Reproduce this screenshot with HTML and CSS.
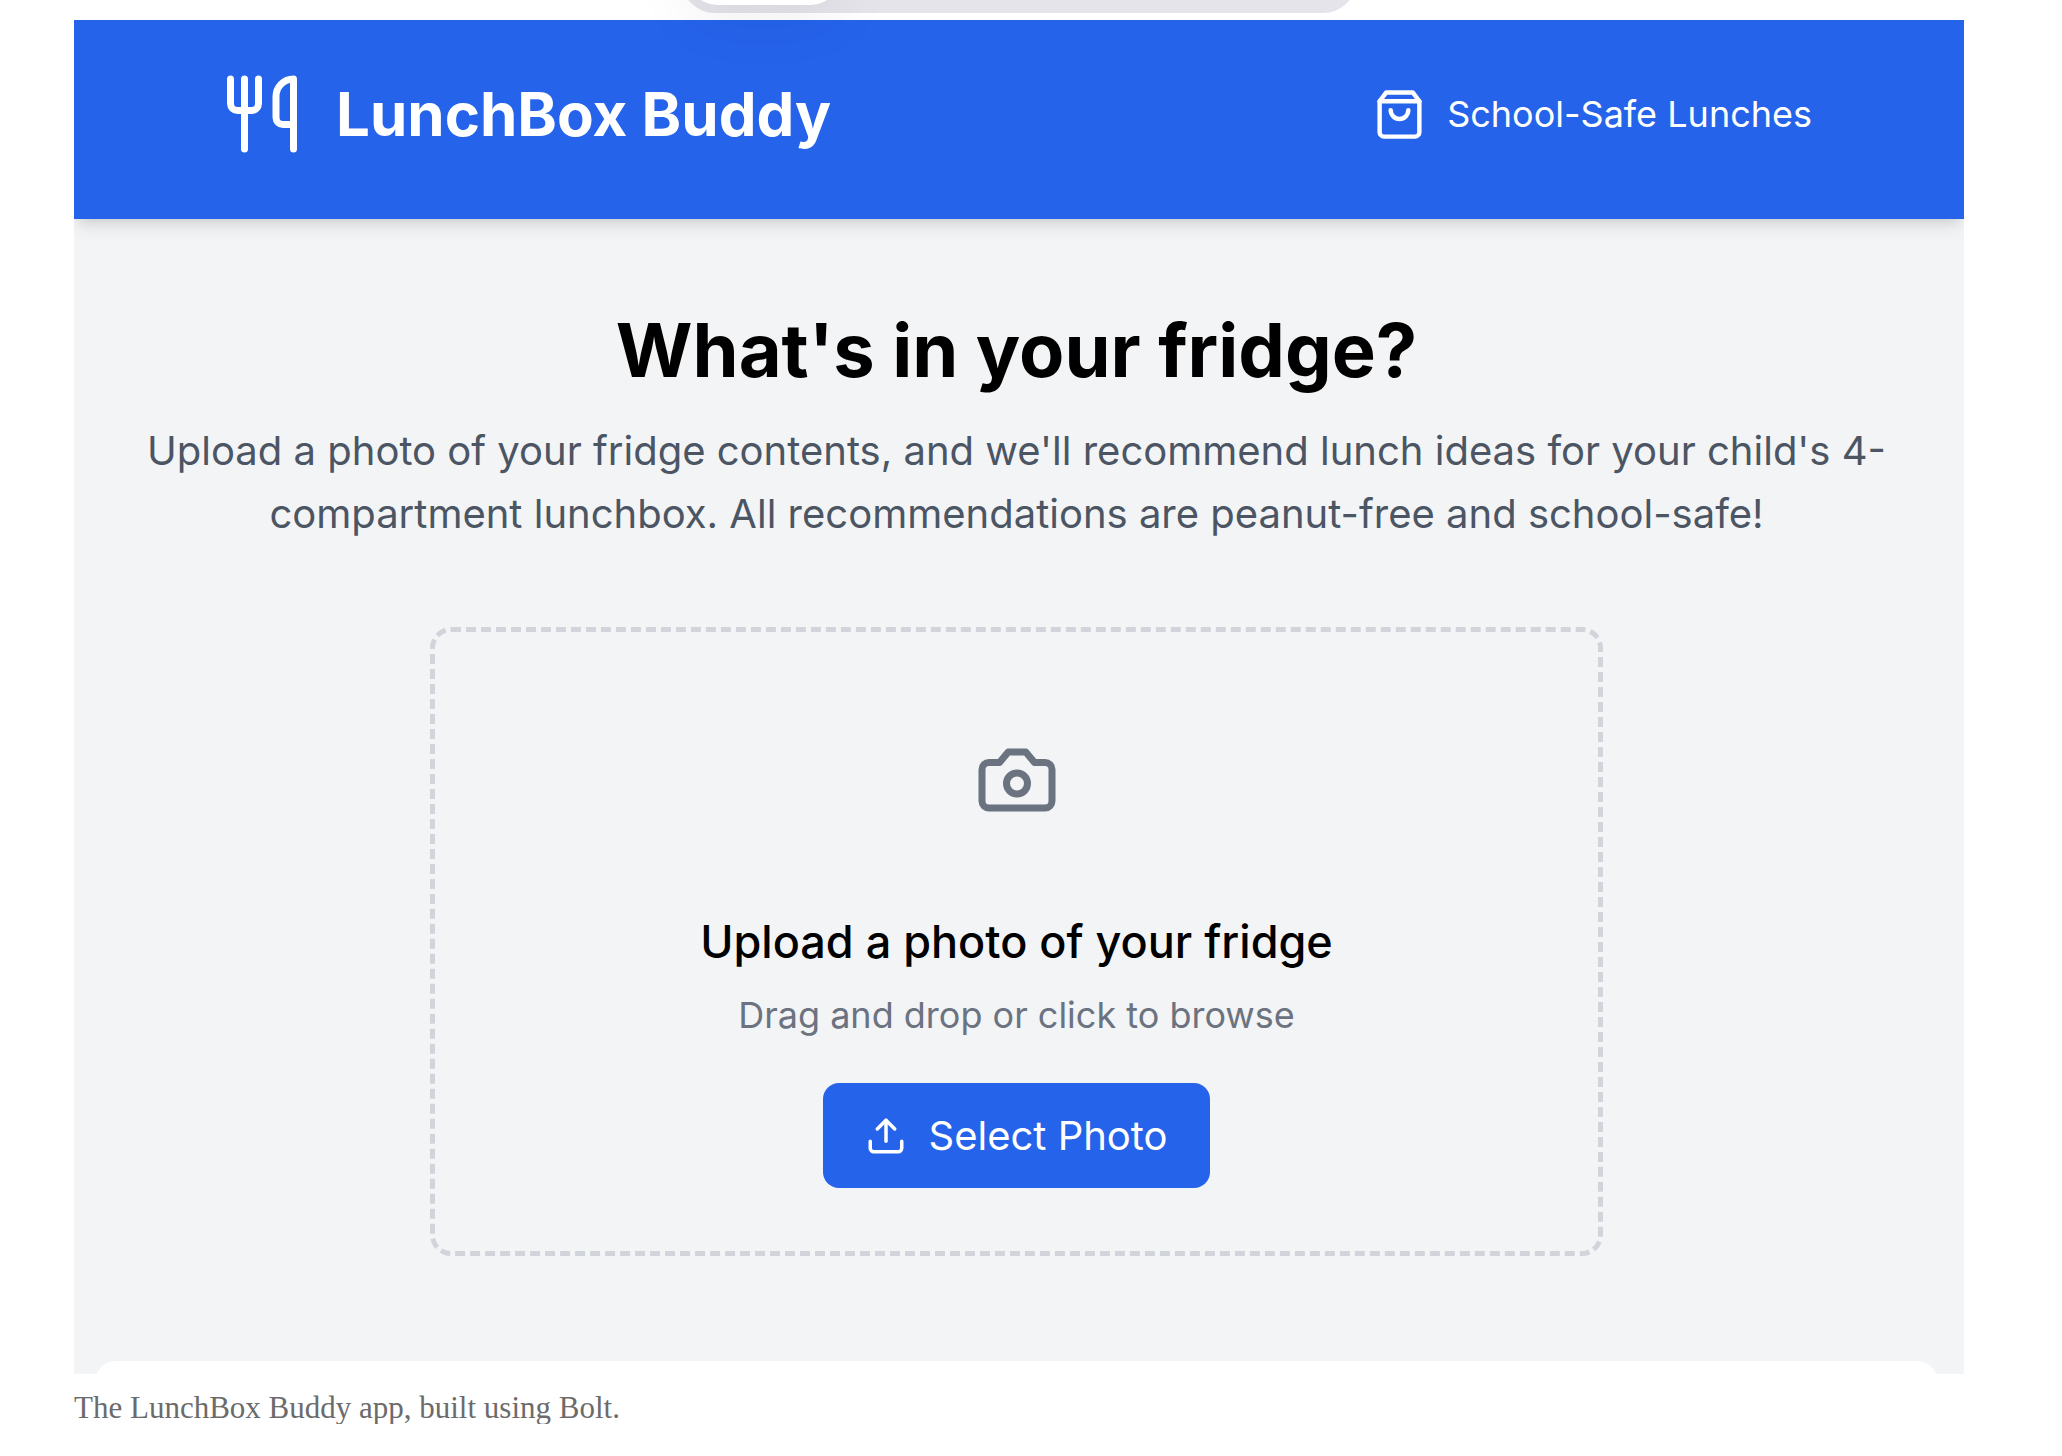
FILE: index.html
```
<!DOCTYPE html>
<html lang="en">
<head>
  <meta charset="UTF-8">
  <meta name="viewport" content="width=device-width, initial-scale=1.0">
  <title>LunchBox Buddy</title>
  <link rel="stylesheet" href="styles.css">
</head>
<body>
  <figure class="preview">
    <div class="app">
      <!-- View switcher, scrolled mostly out of view -->
      <div class="switcher">
        <div class="switcher-active"></div>
      </div>

      <header class="header">
        <div class="brand">
          <svg class="icon-large" viewBox="0 0 24 24">
            <path d="M3 2v7c0 1.1.9 2 2 2h4a2 2 0 0 0 2-2V2"/>
            <path d="M7 2v20"/>
            <path d="M21 15V2a5 5 0 0 0-5 5v6c0 1.1.9 2 2 2h3Zm0 0v7"/>
          </svg>
          <h1>LunchBox Buddy</h1>
        </div>
        <div class="tagline">
          <svg class="icon-medium" viewBox="0 0 24 24">
            <path d="M6 2 3 6v14a2 2 0 0 0 2 2h14a2 2 0 0 0 2-2V6l-3-4Z"/>
            <path d="M3 6h18"/>
            <path d="M16 10a4 4 0 0 1-8 0"/>
          </svg>
          <span>School-Safe Lunches</span>
        </div>
      </header>

      <main class="content">
        <h2>What's in your fridge?</h2>
        <p class="intro">Upload a photo of your fridge contents, and we'll recommend lunch ideas for your child's 4-<wbr>compartment lunchbox. All recommendations are peanut-free and school-safe!</p>

        <!-- Upload area -->
        <section class="dropzone">
          <svg class="icon-large camera" viewBox="0 0 24 24">
            <path d="M14.5 4h-5L7 7H4a2 2 0 0 0-2 2v9a2 2 0 0 0 2 2h16a2 2 0 0 0 2-2V9a2 2 0 0 0-2-2h-3l-2.5-3z"/>
            <circle cx="12" cy="13" r="3"/>
          </svg>
          <h3>Upload a photo of your fridge</h3>
          <p class="hint">Drag and drop or click to browse</p>
          <button type="button" class="select-button">
            <svg class="icon-small" viewBox="0 0 24 24">
              <path d="M21 15v4a2 2 0 0 1-2 2H5a2 2 0 0 1-2-2v-4"/>
              <path d="m17 8-5-5-5 5"/>
              <path d="M12 3v12"/>
            </svg>
            Select Photo
          </button>
        </section>

        <div class="results"></div>
      </main>
    </div>
    <figcaption>The LunchBox Buddy app, built using Bolt.</figcaption>
  </figure>
</body>
</html>
```
FILE: styles.css
```
* {
  box-sizing: border-box;
}
body {
  margin: 0;
  background-color: #fff;
  font-family: Inter, "Liberation Sans", sans-serif;
}
h1, h2, h3, p {
  margin: 0;
}
svg {
  display: block;
  flex-shrink: 0;
  fill: none;
  stroke: currentColor;
  stroke-width: 2;
  stroke-linecap: round;
  stroke-linejoin: round;
}
.icon-large {
  width: 84px;
  height: 84px;
}
.icon-medium {
  width: 53px;
  height: 53px;
}
.icon-small {
  width: 42px;
  height: 42px;
}
.preview {
  margin: 0 98px 0 74px;
}
.app {
  position: relative;
  overflow: hidden;
  padding-top: 20px;
}

/* View switcher */
.switcher {
  position: absolute;
  z-index: 2;
  top: -67px;
  left: 0;
  right: 0;
  width: 676px;
  height: 80px;
  margin: 0 auto;
  padding: 8px;
  background-color: #e5e4ea;
  border-radius: 34px;
}
.switcher-active {
  width: 150px;
  height: 64px;
  background-color: #fff;
  border-radius: 28px;
  box-shadow: 0 8px 64px rgba(0, 0, 0, 0.08);
}

/* Header */
.header {
  position: relative;
  z-index: 1;
  display: flex;
  justify-content: space-between;
  align-items: center;
  padding: 52px 152px 63px 146px;
  background-color: #2563eb;
  color: #fff;
  box-shadow: 0 10px 16px -3px rgba(0, 0, 0, 0.1), 0 5px 10px -5px rgba(0, 0, 0, 0.1);
}
.brand {
  display: flex;
  align-items: center;
  gap: 32px;
}
.brand h1 {
  font-size: 60px;
  line-height: 84px;
  font-weight: 700;
}
.tagline {
  display: flex;
  align-items: center;
  gap: 21px;
  font-size: 36px;
  line-height: 52px;
}

/* Main content */
.content {
  display: flex;
  flex-direction: column;
  align-items: center;
  padding: 84px 26px 0 21px;
  background-color: #f3f4f6;
  text-align: center;
}
.content h2 {
  margin-bottom: 21px;
  color: #000;
  font-size: 74px;
  line-height: 95px;
  font-weight: 700;
}
.intro {
  max-width: 1764px;
  margin-bottom: 82px;
  color: #4b5563;
  font-size: 40px;
  line-height: 63px;
}
.dropzone {
  display: flex;
  flex-direction: column;
  align-items: center;
  width: 100%;
  max-width: 1173px;
  margin-bottom: 105px;
  padding: 106px 63px 63px;
  border: 5px dashed #d1d5db;
  border-radius: 21px;
}
.camera {
  margin-bottom: 83px;
  color: #6b7280;
}
.dropzone h3 {
  margin-bottom: 10px;
  font-size: 45px;
  line-height: 74px;
  font-weight: 500;
}
.hint {
  margin-bottom: 42px;
  color: #6b7280;
  font-size: 36px;
  line-height: 52px;
}
.select-button {
  display: flex;
  align-items: center;
  gap: 21px;
  padding: 21px 42px;
  border: none;
  border-radius: 16px;
  background-color: #2563eb;
  color: #fff;
  font-family: inherit;
  font-size: 40px;
  line-height: 63px;
  cursor: pointer;
}
.select-button:hover {
  background-color: #1d4ed8;
}
/* only the top edge of the results card shows */
.results {
  width: 100%;
  height: 42px;
  margin-bottom: -29px;
  background-color: #fff;
  border-radius: 21px 21px 0 0;
}

figcaption {
  padding-top: 18px;
  color: #6b6b6b;
  font-family: "Liberation Serif", serif;
  font-size: 31px;
  line-height: 32px;
}
```
